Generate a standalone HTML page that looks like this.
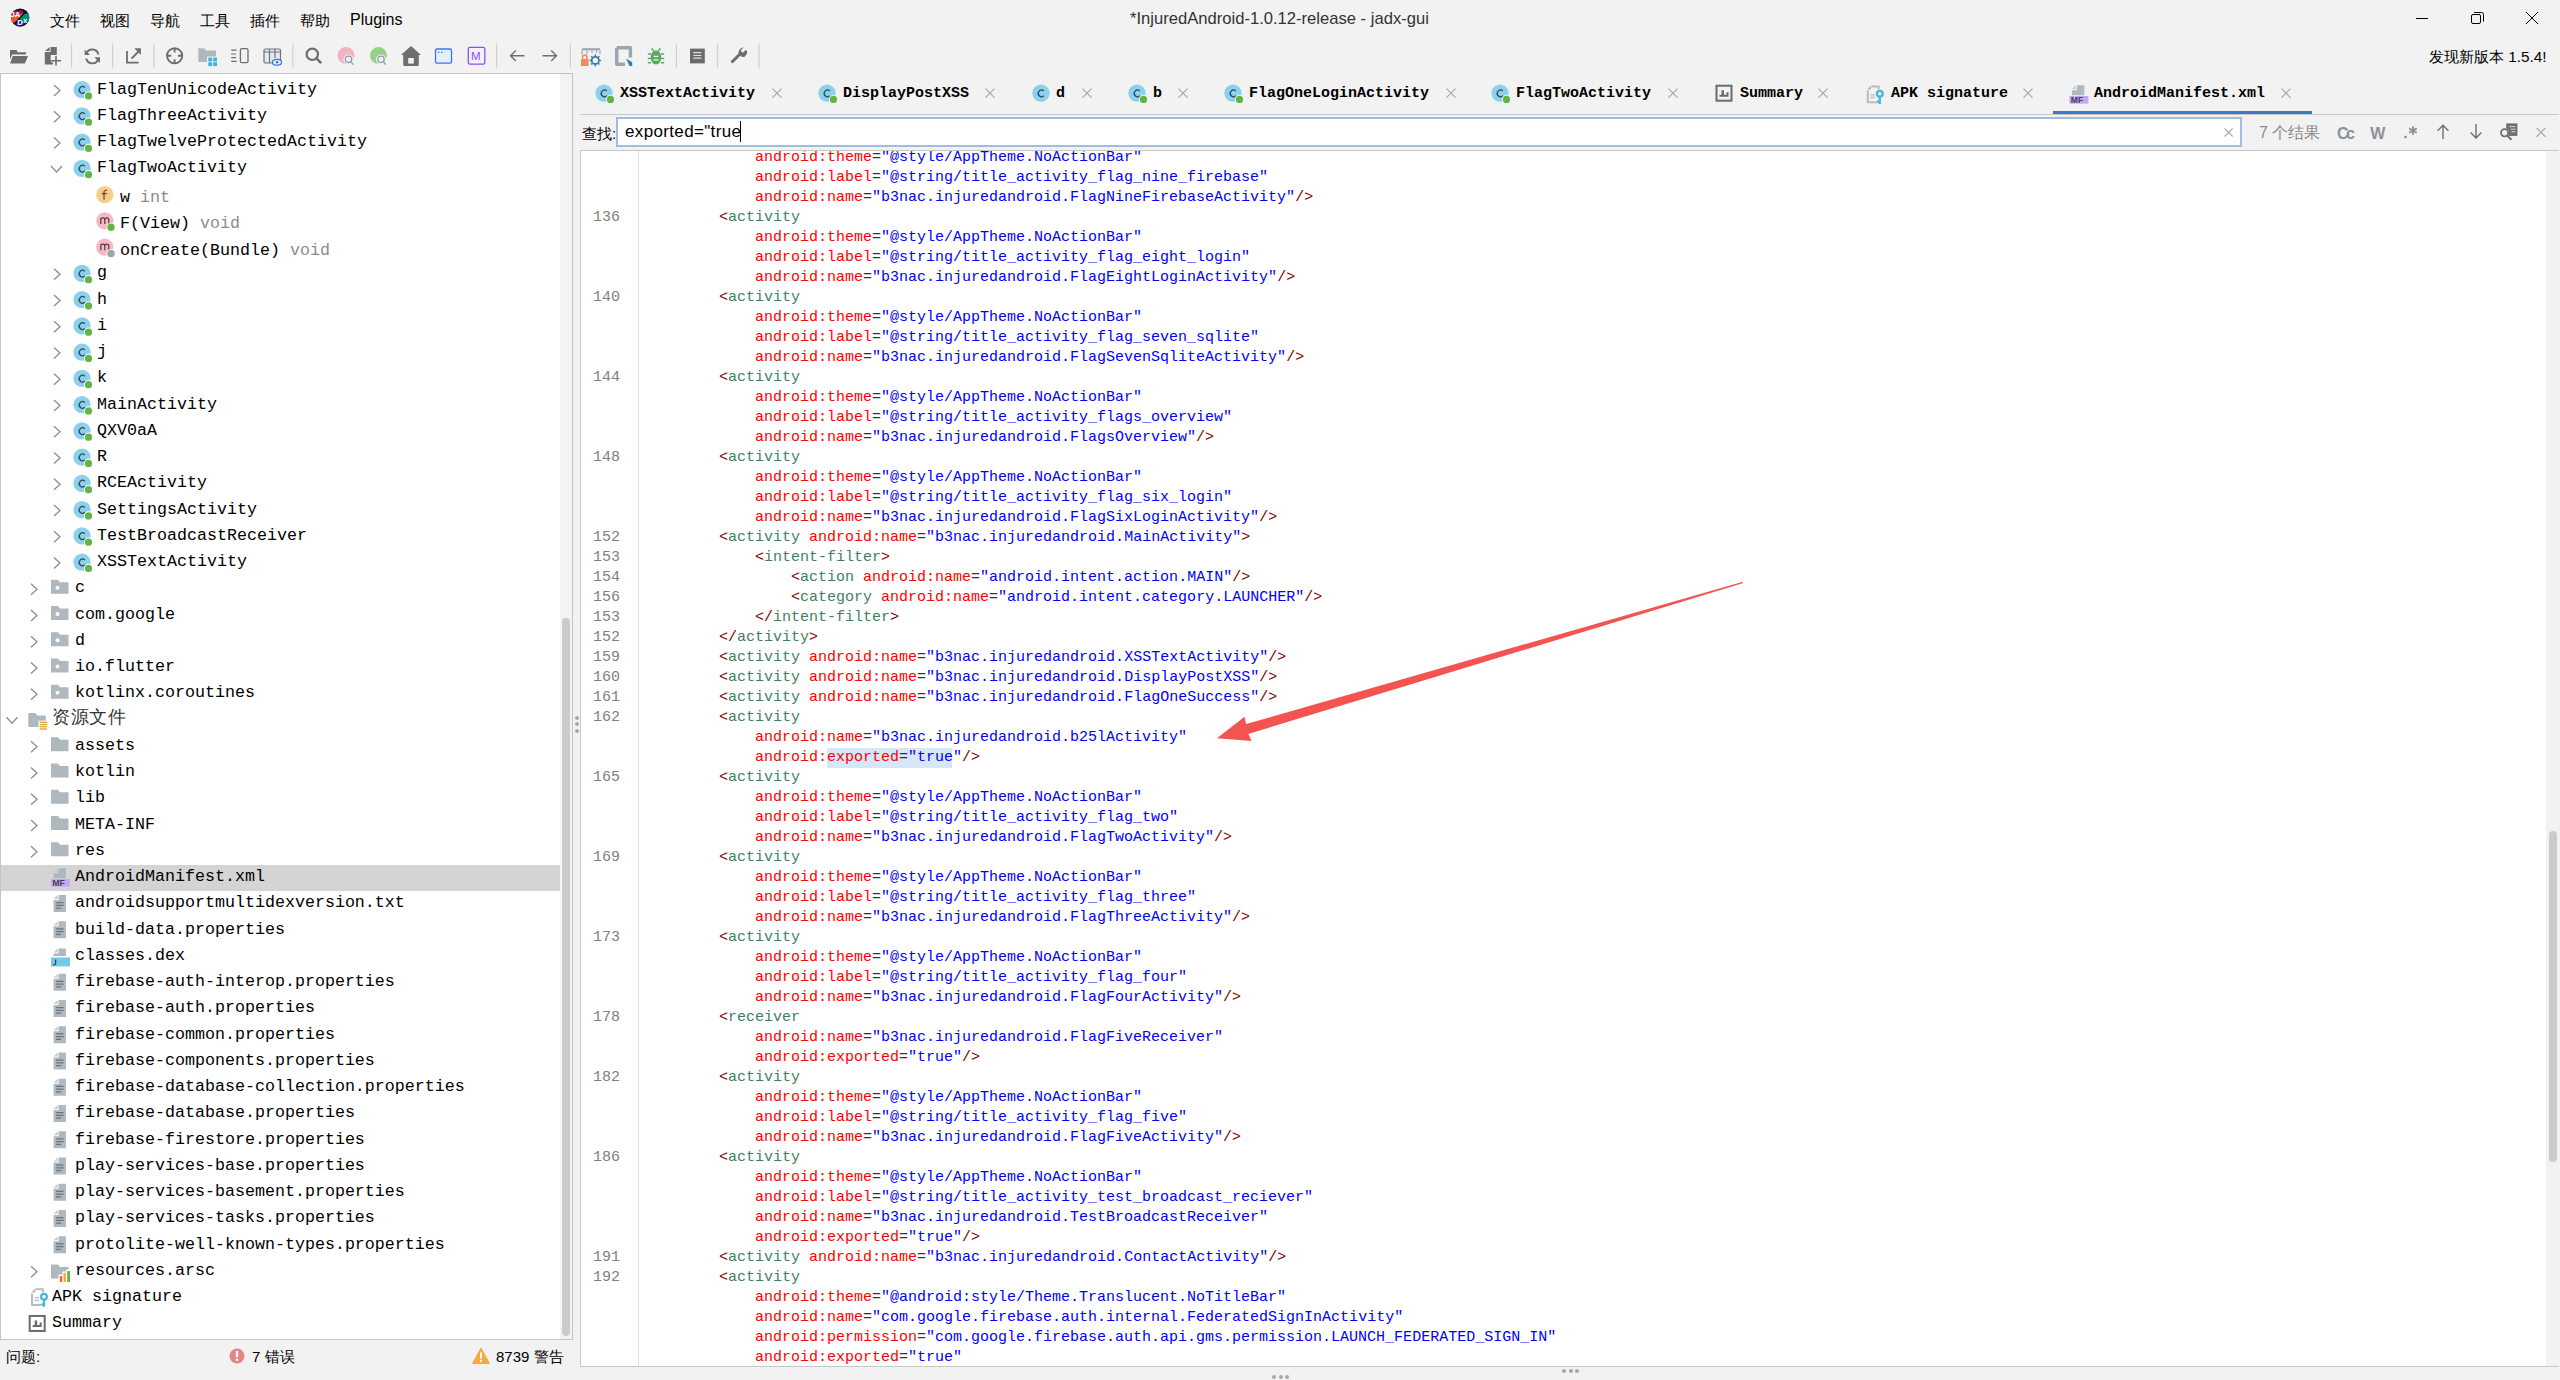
<!DOCTYPE html><html><head><meta charset="utf-8"><style>
*{margin:0;padding:0;box-sizing:border-box}
html,body{width:2560px;height:1380px;overflow:hidden}
body{background:#f2f2f2;position:relative;font-family:"Liberation Sans",sans-serif;color:#000}
.a{position:absolute;white-space:pre}
.ui{font-family:"Liberation Sans",sans-serif;font-size:16px;line-height:20px}
.mono{font-family:"Liberation Mono",monospace}
.code{font-family:"Liberation Mono",monospace;font-size:15px;line-height:20px;height:20px}
.tr{font-family:"Liberation Mono",monospace;font-size:16.67px;line-height:26px;height:26px}
.tab{font-family:"Liberation Mono",monospace;font-weight:bold;font-size:15px;line-height:20px}
.d{color:#800000}.t{color:#3f7f5f}.n{color:#ff0000}.q{color:#333}.v{color:#0000ff}
.ln{color:#808080;text-align:right;width:40px}
.gr{color:#8c8c8c}
svg{position:absolute;overflow:visible}
</style></head><body><div class="a ui" style="left:50px;top:11px;font-size:15px">文件</div>
<div class="a ui" style="left:100px;top:11px;font-size:15px">视图</div>
<div class="a ui" style="left:150px;top:11px;font-size:15px">导航</div>
<div class="a ui" style="left:200px;top:11px;font-size:15px">工具</div>
<div class="a ui" style="left:250px;top:11px;font-size:15px">插件</div>
<div class="a ui" style="left:300px;top:11px;font-size:15px">帮助</div>
<div class="a ui" style="left:350px;top:10px">Plugins</div>
<div class="a ui" style="left:1130px;top:9px;color:#333;font-size:16.6px">*InjuredAndroid-1.0.12-release - jadx-gui</div>
<div class="a ui" style="left:2429px;top:47.4px;font-size:15.3px">发现新版本 1.5.4!</div>
<div class="a" style="left:0;top:73px;width:573px;height:1267px;border:1px solid #c4c4c4;background:#fff"></div>
<div class="a" style="left:560px;top:74px;width:12px;height:1265px;background:#f3f3f3"></div>
<div class="a" style="left:562px;top:618px;width:8px;height:718px;border-radius:4px;background:#cbcbcb"></div>
<div class="a" style="left:1px;top:865px;width:559px;height:26px;background:#d4d4d4"></div>
<div class="a tr" style="left:97px;top:76.70px">FlagTenUnicodeActivity</div>
<div class="a tr" style="left:97px;top:102.95px">FlagThreeActivity</div>
<div class="a tr" style="left:97px;top:129.20px">FlagTwelveProtectedActivity</div>
<div class="a tr" style="left:97px;top:155.45px">FlagTwoActivity</div>
<div class="a tr" style="left:120px;top:185.20px">w <span class="gr">int</span></div>
<div class="a tr" style="left:120px;top:211.45px">F(View) <span class="gr">void</span></div>
<div class="a tr" style="left:120px;top:237.70px">onCreate(Bundle) <span class="gr">void</span></div>
<div class="a tr" style="left:97px;top:260.45px">g</div>
<div class="a tr" style="left:97px;top:286.70px">h</div>
<div class="a tr" style="left:97px;top:312.95px">i</div>
<div class="a tr" style="left:97px;top:339.20px">j</div>
<div class="a tr" style="left:97px;top:365.45px">k</div>
<div class="a tr" style="left:97px;top:391.70px">MainActivity</div>
<div class="a tr" style="left:97px;top:417.95px">QXV0aA</div>
<div class="a tr" style="left:97px;top:444.20px">R</div>
<div class="a tr" style="left:97px;top:470.45px">RCEActivity</div>
<div class="a tr" style="left:97px;top:496.70px">SettingsActivity</div>
<div class="a tr" style="left:97px;top:522.95px">TestBroadcastReceiver</div>
<div class="a tr" style="left:97px;top:549.20px">XSSTextActivity</div>
<div class="a tr" style="left:75px;top:575.45px">c</div>
<div class="a tr" style="left:75px;top:601.70px">com.google</div>
<div class="a tr" style="left:75px;top:627.95px">d</div>
<div class="a tr" style="left:75px;top:654.20px">io.flutter</div>
<div class="a tr" style="left:75px;top:680.45px">kotlinx.coroutines</div>
<div class="a tr" style="left:52px;top:706.70px;font-size:18px;color:#333;letter-spacing:0.6px;margin-top:-1.5px">资源文件</div>
<div class="a tr" style="left:75px;top:732.95px">assets</div>
<div class="a tr" style="left:75px;top:759.20px">kotlin</div>
<div class="a tr" style="left:75px;top:785.45px">lib</div>
<div class="a tr" style="left:75px;top:811.70px">META-INF</div>
<div class="a tr" style="left:75px;top:837.95px">res</div>
<div class="a tr" style="left:75px;top:864.20px">AndroidManifest.xml</div>
<div class="a tr" style="left:75px;top:890.45px">androidsupportmultidexversion.txt</div>
<div class="a tr" style="left:75px;top:916.70px">build-data.properties</div>
<div class="a tr" style="left:75px;top:942.95px">classes.dex</div>
<div class="a tr" style="left:75px;top:969.20px">firebase-auth-interop.properties</div>
<div class="a tr" style="left:75px;top:995.45px">firebase-auth.properties</div>
<div class="a tr" style="left:75px;top:1021.70px">firebase-common.properties</div>
<div class="a tr" style="left:75px;top:1047.95px">firebase-components.properties</div>
<div class="a tr" style="left:75px;top:1074.20px">firebase-database-collection.properties</div>
<div class="a tr" style="left:75px;top:1100.45px">firebase-database.properties</div>
<div class="a tr" style="left:75px;top:1126.70px">firebase-firestore.properties</div>
<div class="a tr" style="left:75px;top:1152.95px">play-services-base.properties</div>
<div class="a tr" style="left:75px;top:1179.20px">play-services-basement.properties</div>
<div class="a tr" style="left:75px;top:1205.45px">play-services-tasks.properties</div>
<div class="a tr" style="left:75px;top:1231.70px">protolite-well-known-types.properties</div>
<div class="a tr" style="left:75px;top:1257.95px">resources.arsc</div>
<div class="a tr" style="left:52px;top:1284.20px">APK signature</div>
<div class="a tr" style="left:52px;top:1310.45px">Summary</div>
<div class="a ui" style="left:6px;top:1347px;font-size:15px">问题:</div>
<div class="a ui" style="left:252px;top:1347px;font-size:15px">7 错误</div>
<div class="a ui" style="left:496px;top:1347px;font-size:15px">8739 警告</div>
<div class="a" style="left:580px;top:114px;width:1979px;height:1px;background:#c8c8c8"></div>
<div class="a" style="left:2053px;top:111px;width:259px;height:3px;background:#3a7bc8"></div>
<div class="a tab" style="left:620px;top:84px">XSSTextActivity</div>
<div class="a tab" style="left:843px;top:84px">DisplayPostXSS</div>
<div class="a tab" style="left:1056px;top:84px">d</div>
<div class="a tab" style="left:1153px;top:84px">b</div>
<div class="a tab" style="left:1249px;top:84px">FlagOneLoginActivity</div>
<div class="a tab" style="left:1516px;top:84px">FlagTwoActivity</div>
<div class="a tab" style="left:1740px;top:84px">Summary</div>
<div class="a tab" style="left:1891px;top:84px">APK signature</div>
<div class="a tab" style="left:2094px;top:84px">AndroidManifest.xml</div>
<div class="a ui" style="left:582px;top:124px;font-size:15px">查找:</div>
<div class="a" style="left:616px;top:117px;width:1626px;height:30px;border:2px solid #9dbde4;background:#fff"></div>
<div class="a ui" style="left:625px;top:122px;font-size:17px;letter-spacing:0.35px">exported="true</div>
<div class="a" style="left:740px;top:121px;width:1.3px;height:21px;background:#000"></div>
<div class="a ui" style="left:2259px;top:123px;color:#8a8a8a">7 个结果</div>
<div class="a" style="left:580px;top:150px;width:1979px;height:1217px;border:1px solid #c8c8c8;border-right:none;background:#fff;overflow:hidden" id="ed"></div>
<div class="a" style="left:638px;top:151px;width:1px;height:1215px;background:#e0e0e0"></div>
<div class="a" style="left:2546px;top:151px;width:13px;height:1215px;background:#f2f2f2"></div>
<div class="a" style="left:2549px;top:831px;width:8px;height:331px;border-radius:4px;background:#cbcbcb"></div>
<div class="a" style="left:581px;top:151px;width:1965px;height:1215px;overflow:hidden">
<div class="a" style="left:-581px;top:-151px;width:2560px;height:1380px">
<div class="a" style="left:827px;top:748px;width:125px;height:20px;background:#d7e7f9"></div>
<div class="a code" style="left:755px;top:148px"><span class="n">android:theme</span><span class="q">=</span><span class="v">"@style/AppTheme.NoActionBar"</span></div>
<div class="a code" style="left:755px;top:168px"><span class="n">android:label</span><span class="q">=</span><span class="v">"@string/title_activity_flag_nine_firebase"</span></div>
<div class="a code" style="left:755px;top:188px"><span class="n">android:name</span><span class="q">=</span><span class="v">"b3nac.injuredandroid.FlagNineFirebaseActivity"</span><span class="d">/&gt;</span></div>
<div class="a code ln" style="left:580px;top:208px">136</div>
<div class="a code" style="left:719px;top:208px"><span class="d">&lt;</span><span class="t">activity</span></div>
<div class="a code" style="left:755px;top:228px"><span class="n">android:theme</span><span class="q">=</span><span class="v">"@style/AppTheme.NoActionBar"</span></div>
<div class="a code" style="left:755px;top:248px"><span class="n">android:label</span><span class="q">=</span><span class="v">"@string/title_activity_flag_eight_login"</span></div>
<div class="a code" style="left:755px;top:268px"><span class="n">android:name</span><span class="q">=</span><span class="v">"b3nac.injuredandroid.FlagEightLoginActivity"</span><span class="d">/&gt;</span></div>
<div class="a code ln" style="left:580px;top:288px">140</div>
<div class="a code" style="left:719px;top:288px"><span class="d">&lt;</span><span class="t">activity</span></div>
<div class="a code" style="left:755px;top:308px"><span class="n">android:theme</span><span class="q">=</span><span class="v">"@style/AppTheme.NoActionBar"</span></div>
<div class="a code" style="left:755px;top:328px"><span class="n">android:label</span><span class="q">=</span><span class="v">"@string/title_activity_flag_seven_sqlite"</span></div>
<div class="a code" style="left:755px;top:348px"><span class="n">android:name</span><span class="q">=</span><span class="v">"b3nac.injuredandroid.FlagSevenSqliteActivity"</span><span class="d">/&gt;</span></div>
<div class="a code ln" style="left:580px;top:368px">144</div>
<div class="a code" style="left:719px;top:368px"><span class="d">&lt;</span><span class="t">activity</span></div>
<div class="a code" style="left:755px;top:388px"><span class="n">android:theme</span><span class="q">=</span><span class="v">"@style/AppTheme.NoActionBar"</span></div>
<div class="a code" style="left:755px;top:408px"><span class="n">android:label</span><span class="q">=</span><span class="v">"@string/title_activity_flags_overview"</span></div>
<div class="a code" style="left:755px;top:428px"><span class="n">android:name</span><span class="q">=</span><span class="v">"b3nac.injuredandroid.FlagsOverview"</span><span class="d">/&gt;</span></div>
<div class="a code ln" style="left:580px;top:448px">148</div>
<div class="a code" style="left:719px;top:448px"><span class="d">&lt;</span><span class="t">activity</span></div>
<div class="a code" style="left:755px;top:468px"><span class="n">android:theme</span><span class="q">=</span><span class="v">"@style/AppTheme.NoActionBar"</span></div>
<div class="a code" style="left:755px;top:488px"><span class="n">android:label</span><span class="q">=</span><span class="v">"@string/title_activity_flag_six_login"</span></div>
<div class="a code" style="left:755px;top:508px"><span class="n">android:name</span><span class="q">=</span><span class="v">"b3nac.injuredandroid.FlagSixLoginActivity"</span><span class="d">/&gt;</span></div>
<div class="a code ln" style="left:580px;top:528px">152</div>
<div class="a code" style="left:719px;top:528px"><span class="d">&lt;</span><span class="t">activity</span> <span class="n">android:name</span><span class="q">=</span><span class="v">"b3nac.injuredandroid.MainActivity"</span><span class="d">&gt;</span></div>
<div class="a code ln" style="left:580px;top:548px">153</div>
<div class="a code" style="left:755px;top:548px"><span class="d">&lt;</span><span class="t">intent-filter</span><span class="d">&gt;</span></div>
<div class="a code ln" style="left:580px;top:568px">154</div>
<div class="a code" style="left:791px;top:568px"><span class="d">&lt;</span><span class="t">action</span> <span class="n">android:name</span><span class="q">=</span><span class="v">"android.intent.action.MAIN"</span><span class="d">/&gt;</span></div>
<div class="a code ln" style="left:580px;top:588px">156</div>
<div class="a code" style="left:791px;top:588px"><span class="d">&lt;</span><span class="t">category</span> <span class="n">android:name</span><span class="q">=</span><span class="v">"android.intent.category.LAUNCHER"</span><span class="d">/&gt;</span></div>
<div class="a code ln" style="left:580px;top:608px">153</div>
<div class="a code" style="left:755px;top:608px"><span class="d">&lt;/</span><span class="t">intent-filter</span><span class="d">&gt;</span></div>
<div class="a code ln" style="left:580px;top:628px">152</div>
<div class="a code" style="left:719px;top:628px"><span class="d">&lt;/</span><span class="t">activity</span><span class="d">&gt;</span></div>
<div class="a code ln" style="left:580px;top:648px">159</div>
<div class="a code" style="left:719px;top:648px"><span class="d">&lt;</span><span class="t">activity</span> <span class="n">android:name</span><span class="q">=</span><span class="v">"b3nac.injuredandroid.XSSTextActivity"</span><span class="d">/&gt;</span></div>
<div class="a code ln" style="left:580px;top:668px">160</div>
<div class="a code" style="left:719px;top:668px"><span class="d">&lt;</span><span class="t">activity</span> <span class="n">android:name</span><span class="q">=</span><span class="v">"b3nac.injuredandroid.DisplayPostXSS"</span><span class="d">/&gt;</span></div>
<div class="a code ln" style="left:580px;top:688px">161</div>
<div class="a code" style="left:719px;top:688px"><span class="d">&lt;</span><span class="t">activity</span> <span class="n">android:name</span><span class="q">=</span><span class="v">"b3nac.injuredandroid.FlagOneSuccess"</span><span class="d">/&gt;</span></div>
<div class="a code ln" style="left:580px;top:708px">162</div>
<div class="a code" style="left:719px;top:708px"><span class="d">&lt;</span><span class="t">activity</span></div>
<div class="a code" style="left:755px;top:728px"><span class="n">android:name</span><span class="q">=</span><span class="v">"b3nac.injuredandroid.b25lActivity"</span></div>
<div class="a code" style="left:755px;top:748px"><span class="n">android:</span><span class="n">exported</span><span class="q">=</span><span class="v">"true"</span><span class="d">/&gt;</span></div>
<div class="a code ln" style="left:580px;top:768px">165</div>
<div class="a code" style="left:719px;top:768px"><span class="d">&lt;</span><span class="t">activity</span></div>
<div class="a code" style="left:755px;top:788px"><span class="n">android:theme</span><span class="q">=</span><span class="v">"@style/AppTheme.NoActionBar"</span></div>
<div class="a code" style="left:755px;top:808px"><span class="n">android:label</span><span class="q">=</span><span class="v">"@string/title_activity_flag_two"</span></div>
<div class="a code" style="left:755px;top:828px"><span class="n">android:name</span><span class="q">=</span><span class="v">"b3nac.injuredandroid.FlagTwoActivity"</span><span class="d">/&gt;</span></div>
<div class="a code ln" style="left:580px;top:848px">169</div>
<div class="a code" style="left:719px;top:848px"><span class="d">&lt;</span><span class="t">activity</span></div>
<div class="a code" style="left:755px;top:868px"><span class="n">android:theme</span><span class="q">=</span><span class="v">"@style/AppTheme.NoActionBar"</span></div>
<div class="a code" style="left:755px;top:888px"><span class="n">android:label</span><span class="q">=</span><span class="v">"@string/title_activity_flag_three"</span></div>
<div class="a code" style="left:755px;top:908px"><span class="n">android:name</span><span class="q">=</span><span class="v">"b3nac.injuredandroid.FlagThreeActivity"</span><span class="d">/&gt;</span></div>
<div class="a code ln" style="left:580px;top:928px">173</div>
<div class="a code" style="left:719px;top:928px"><span class="d">&lt;</span><span class="t">activity</span></div>
<div class="a code" style="left:755px;top:948px"><span class="n">android:theme</span><span class="q">=</span><span class="v">"@style/AppTheme.NoActionBar"</span></div>
<div class="a code" style="left:755px;top:968px"><span class="n">android:label</span><span class="q">=</span><span class="v">"@string/title_activity_flag_four"</span></div>
<div class="a code" style="left:755px;top:988px"><span class="n">android:name</span><span class="q">=</span><span class="v">"b3nac.injuredandroid.FlagFourActivity"</span><span class="d">/&gt;</span></div>
<div class="a code ln" style="left:580px;top:1008px">178</div>
<div class="a code" style="left:719px;top:1008px"><span class="d">&lt;</span><span class="t">receiver</span></div>
<div class="a code" style="left:755px;top:1028px"><span class="n">android:name</span><span class="q">=</span><span class="v">"b3nac.injuredandroid.FlagFiveReceiver"</span></div>
<div class="a code" style="left:755px;top:1048px"><span class="n">android:exported</span><span class="q">=</span><span class="v">"true"</span><span class="d">/&gt;</span></div>
<div class="a code ln" style="left:580px;top:1068px">182</div>
<div class="a code" style="left:719px;top:1068px"><span class="d">&lt;</span><span class="t">activity</span></div>
<div class="a code" style="left:755px;top:1088px"><span class="n">android:theme</span><span class="q">=</span><span class="v">"@style/AppTheme.NoActionBar"</span></div>
<div class="a code" style="left:755px;top:1108px"><span class="n">android:label</span><span class="q">=</span><span class="v">"@string/title_activity_flag_five"</span></div>
<div class="a code" style="left:755px;top:1128px"><span class="n">android:name</span><span class="q">=</span><span class="v">"b3nac.injuredandroid.FlagFiveActivity"</span><span class="d">/&gt;</span></div>
<div class="a code ln" style="left:580px;top:1148px">186</div>
<div class="a code" style="left:719px;top:1148px"><span class="d">&lt;</span><span class="t">activity</span></div>
<div class="a code" style="left:755px;top:1168px"><span class="n">android:theme</span><span class="q">=</span><span class="v">"@style/AppTheme.NoActionBar"</span></div>
<div class="a code" style="left:755px;top:1188px"><span class="n">android:label</span><span class="q">=</span><span class="v">"@string/title_activity_test_broadcast_reciever"</span></div>
<div class="a code" style="left:755px;top:1208px"><span class="n">android:name</span><span class="q">=</span><span class="v">"b3nac.injuredandroid.TestBroadcastReceiver"</span></div>
<div class="a code" style="left:755px;top:1228px"><span class="n">android:exported</span><span class="q">=</span><span class="v">"true"</span><span class="d">/&gt;</span></div>
<div class="a code ln" style="left:580px;top:1248px">191</div>
<div class="a code" style="left:719px;top:1248px"><span class="d">&lt;</span><span class="t">activity</span> <span class="n">android:name</span><span class="q">=</span><span class="v">"b3nac.injuredandroid.ContactActivity"</span><span class="d">/&gt;</span></div>
<div class="a code ln" style="left:580px;top:1268px">192</div>
<div class="a code" style="left:719px;top:1268px"><span class="d">&lt;</span><span class="t">activity</span></div>
<div class="a code" style="left:755px;top:1288px"><span class="n">android:theme</span><span class="q">=</span><span class="v">"@android:style/Theme.Translucent.NoTitleBar"</span></div>
<div class="a code" style="left:755px;top:1308px"><span class="n">android:name</span><span class="q">=</span><span class="v">"com.google.firebase.auth.internal.FederatedSignInActivity"</span></div>
<div class="a code" style="left:755px;top:1328px"><span class="n">android:permission</span><span class="q">=</span><span class="v">"com.google.firebase.auth.api.gms.permission.LAUNCH_FEDERATED_SIGN_IN"</span></div>
<div class="a code" style="left:755px;top:1348px"><span class="n">android:exported</span><span class="q">=</span><span class="v">"true"</span></div>
</div></div>
<div class="a" style="left:1272.0px;top:1374.5px;width:4px;height:4px;border-radius:2px;background:#a8a8a8"></div>
<div class="a" style="left:1278.5px;top:1374.5px;width:4px;height:4px;border-radius:2px;background:#a8a8a8"></div>
<div class="a" style="left:1284.5px;top:1374.5px;width:4px;height:4px;border-radius:2px;background:#a8a8a8"></div>
<div class="a" style="left:1562.0px;top:1368.5px;width:4px;height:4px;border-radius:2px;background:#a8a8a8"></div>
<div class="a" style="left:1568.5px;top:1368.5px;width:4px;height:4px;border-radius:2px;background:#a8a8a8"></div>
<div class="a" style="left:1574.5px;top:1368.5px;width:4px;height:4px;border-radius:2px;background:#a8a8a8"></div>
<div class="a" style="left:574.5px;top:715.5px;width:4px;height:4px;border-radius:2px;background:#a8a8a8"></div>
<div class="a" style="left:574.5px;top:722.0px;width:4px;height:4px;border-radius:2px;background:#a8a8a8"></div>
<div class="a" style="left:574.5px;top:728.5px;width:4px;height:4px;border-radius:2px;background:#a8a8a8"></div>
<svg class="a" style="left:0;top:0" width="2560" height="1380" viewBox="0 0 2560 1380"><path d="M54,85.0 L60,90.5 L54,96.0" fill="none" stroke="#8c8c8c" stroke-width="1.3"/><circle cx="82" cy="89.7" r="8.6" fill="#89d1ec"/><path d="M84.8,87.5 A3.3,3.3 0 1 0 84.8,92.3" fill="none" stroke="#37474f" stroke-width="1.3"/><circle cx="88.5" cy="95.9" r="4.6" fill="#fff"/><circle cx="88.5" cy="95.9" r="3.6" fill="#62b543"/><path d="M54,111.25 L60,116.75 L54,122.25" fill="none" stroke="#8c8c8c" stroke-width="1.3"/><circle cx="82" cy="115.95" r="8.6" fill="#89d1ec"/><path d="M84.8,113.75 A3.3,3.3 0 1 0 84.8,118.55" fill="none" stroke="#37474f" stroke-width="1.3"/><circle cx="88.5" cy="122.15" r="4.6" fill="#fff"/><circle cx="88.5" cy="122.15" r="3.6" fill="#62b543"/><path d="M54,137.5 L60,143.0 L54,148.5" fill="none" stroke="#8c8c8c" stroke-width="1.3"/><circle cx="82" cy="142.2" r="8.6" fill="#89d1ec"/><path d="M84.8,140.0 A3.3,3.3 0 1 0 84.8,144.79999999999998" fill="none" stroke="#37474f" stroke-width="1.3"/><circle cx="88.5" cy="148.39999999999998" r="4.6" fill="#fff"/><circle cx="88.5" cy="148.39999999999998" r="3.6" fill="#62b543"/><path d="M51.0,166.04999999999998 L56.5,172.04999999999998 L62.0,166.04999999999998" fill="none" stroke="#8c8c8c" stroke-width="1.3"/><circle cx="82" cy="168.45" r="8.6" fill="#89d1ec"/><path d="M84.8,166.25 A3.3,3.3 0 1 0 84.8,171.04999999999998" fill="none" stroke="#37474f" stroke-width="1.3"/><circle cx="88.5" cy="174.64999999999998" r="4.6" fill="#fff"/><circle cx="88.5" cy="174.64999999999998" r="3.6" fill="#62b543"/><circle cx="104.8" cy="194.7" r="8.6" fill="#f8cd8b"/><path d="M107.0,190.39999999999998 Q103.8,189.7 104.0,192.7 V199.7 M101.8,193.7 H106.8" fill="none" stroke="#5c4a32" stroke-width="1.2"/><circle cx="104.8" cy="220.95" r="8.6" fill="#f7b8c6"/><path d="M100.8,223.95 V217.95 M100.8,219.95 Q100.8,217.95 102.8,217.95 Q104.8,217.95 104.8,219.95 V223.95 M104.8,219.95 Q104.8,217.95 106.8,217.95 Q108.8,217.95 108.8,219.95 V223.95" fill="none" stroke="#4a3b3f" stroke-width="1.2"/><circle cx="111.0" cy="227.25" r="4.6" fill="#fff"/><circle cx="111.0" cy="227.25" r="3.7" fill="#62b543"/><circle cx="104.8" cy="247.2" r="8.6" fill="#f7b8c6"/><path d="M100.8,250.2 V244.2 M100.8,246.2 Q100.8,244.2 102.8,244.2 Q104.8,244.2 104.8,246.2 V250.2 M104.8,246.2 Q104.8,244.2 106.8,244.2 Q108.8,244.2 108.8,246.2 V250.2" fill="none" stroke="#4a3b3f" stroke-width="1.2"/><circle cx="111.0" cy="253.5" r="4.6" fill="#fff"/><circle cx="111.0" cy="253.5" r="3.7" fill="#9aa7b0"/><path d="M54,268.75 L60,274.25 L54,279.75" fill="none" stroke="#8c8c8c" stroke-width="1.3"/><circle cx="82" cy="273.45" r="8.6" fill="#89d1ec"/><path d="M84.8,271.25 A3.3,3.3 0 1 0 84.8,276.05" fill="none" stroke="#37474f" stroke-width="1.3"/><circle cx="88.5" cy="279.65" r="4.6" fill="#fff"/><circle cx="88.5" cy="279.65" r="3.6" fill="#62b543"/><path d="M54,295.0 L60,300.5 L54,306.0" fill="none" stroke="#8c8c8c" stroke-width="1.3"/><circle cx="82" cy="299.7" r="8.6" fill="#89d1ec"/><path d="M84.8,297.5 A3.3,3.3 0 1 0 84.8,302.3" fill="none" stroke="#37474f" stroke-width="1.3"/><circle cx="88.5" cy="305.9" r="4.6" fill="#fff"/><circle cx="88.5" cy="305.9" r="3.6" fill="#62b543"/><path d="M54,321.25 L60,326.75 L54,332.25" fill="none" stroke="#8c8c8c" stroke-width="1.3"/><circle cx="82" cy="325.95" r="8.6" fill="#89d1ec"/><path d="M84.8,323.75 A3.3,3.3 0 1 0 84.8,328.55" fill="none" stroke="#37474f" stroke-width="1.3"/><circle cx="88.5" cy="332.15" r="4.6" fill="#fff"/><circle cx="88.5" cy="332.15" r="3.6" fill="#62b543"/><path d="M54,347.5 L60,353.0 L54,358.5" fill="none" stroke="#8c8c8c" stroke-width="1.3"/><circle cx="82" cy="352.2" r="8.6" fill="#89d1ec"/><path d="M84.8,350.0 A3.3,3.3 0 1 0 84.8,354.8" fill="none" stroke="#37474f" stroke-width="1.3"/><circle cx="88.5" cy="358.4" r="4.6" fill="#fff"/><circle cx="88.5" cy="358.4" r="3.6" fill="#62b543"/><path d="M54,373.75 L60,379.25 L54,384.75" fill="none" stroke="#8c8c8c" stroke-width="1.3"/><circle cx="82" cy="378.45" r="8.6" fill="#89d1ec"/><path d="M84.8,376.25 A3.3,3.3 0 1 0 84.8,381.05" fill="none" stroke="#37474f" stroke-width="1.3"/><circle cx="88.5" cy="384.65" r="4.6" fill="#fff"/><circle cx="88.5" cy="384.65" r="3.6" fill="#62b543"/><path d="M54,400.0 L60,405.5 L54,411.0" fill="none" stroke="#8c8c8c" stroke-width="1.3"/><circle cx="82" cy="404.7" r="8.6" fill="#89d1ec"/><path d="M84.8,402.5 A3.3,3.3 0 1 0 84.8,407.3" fill="none" stroke="#37474f" stroke-width="1.3"/><circle cx="88.5" cy="410.9" r="4.6" fill="#fff"/><circle cx="88.5" cy="410.9" r="3.6" fill="#62b543"/><path d="M54,426.25 L60,431.75 L54,437.25" fill="none" stroke="#8c8c8c" stroke-width="1.3"/><circle cx="82" cy="430.95" r="8.6" fill="#89d1ec"/><path d="M84.8,428.75 A3.3,3.3 0 1 0 84.8,433.55" fill="none" stroke="#37474f" stroke-width="1.3"/><circle cx="88.5" cy="437.15" r="4.6" fill="#fff"/><circle cx="88.5" cy="437.15" r="3.6" fill="#62b543"/><path d="M54,452.5 L60,458.0 L54,463.5" fill="none" stroke="#8c8c8c" stroke-width="1.3"/><circle cx="82" cy="457.2" r="8.6" fill="#89d1ec"/><path d="M84.8,455.0 A3.3,3.3 0 1 0 84.8,459.8" fill="none" stroke="#37474f" stroke-width="1.3"/><circle cx="88.5" cy="463.4" r="4.6" fill="#fff"/><circle cx="88.5" cy="463.4" r="3.6" fill="#62b543"/><path d="M54,478.75 L60,484.25 L54,489.75" fill="none" stroke="#8c8c8c" stroke-width="1.3"/><circle cx="82" cy="483.45" r="8.6" fill="#89d1ec"/><path d="M84.8,481.25 A3.3,3.3 0 1 0 84.8,486.05" fill="none" stroke="#37474f" stroke-width="1.3"/><circle cx="88.5" cy="489.65" r="4.6" fill="#fff"/><circle cx="88.5" cy="489.65" r="3.6" fill="#62b543"/><path d="M54,505.0 L60,510.5 L54,516.0" fill="none" stroke="#8c8c8c" stroke-width="1.3"/><circle cx="82" cy="509.7" r="8.6" fill="#89d1ec"/><path d="M84.8,507.5 A3.3,3.3 0 1 0 84.8,512.3" fill="none" stroke="#37474f" stroke-width="1.3"/><circle cx="88.5" cy="515.9" r="4.6" fill="#fff"/><circle cx="88.5" cy="515.9" r="3.6" fill="#62b543"/><path d="M54,531.25 L60,536.75 L54,542.25" fill="none" stroke="#8c8c8c" stroke-width="1.3"/><circle cx="82" cy="535.95" r="8.6" fill="#89d1ec"/><path d="M84.8,533.75 A3.3,3.3 0 1 0 84.8,538.5500000000001" fill="none" stroke="#37474f" stroke-width="1.3"/><circle cx="88.5" cy="542.1500000000001" r="4.6" fill="#fff"/><circle cx="88.5" cy="542.1500000000001" r="3.6" fill="#62b543"/><path d="M54,557.5 L60,563.0 L54,568.5" fill="none" stroke="#8c8c8c" stroke-width="1.3"/><circle cx="82" cy="562.2" r="8.6" fill="#89d1ec"/><path d="M84.8,560.0 A3.3,3.3 0 1 0 84.8,564.8000000000001" fill="none" stroke="#37474f" stroke-width="1.3"/><circle cx="88.5" cy="568.4000000000001" r="4.6" fill="#fff"/><circle cx="88.5" cy="568.4000000000001" r="3.6" fill="#62b543"/><path d="M31,583.75 L37,589.25 L31,594.75" fill="none" stroke="#8c8c8c" stroke-width="1.3"/><path d="M51,579.75 H58 L60,582.25 H68.5 V593.75 H51 Z" fill="#afb8bf"/><circle cx="57.5" cy="587.75" r="2" fill="#fff"/><path d="M31,610.0 L37,615.5 L31,621.0" fill="none" stroke="#8c8c8c" stroke-width="1.3"/><path d="M51,606.0 H58 L60,608.5 H68.5 V620.0 H51 Z" fill="#afb8bf"/><circle cx="57.5" cy="614.0" r="2" fill="#fff"/><path d="M31,636.25 L37,641.75 L31,647.25" fill="none" stroke="#8c8c8c" stroke-width="1.3"/><path d="M51,632.25 H58 L60,634.75 H68.5 V646.25 H51 Z" fill="#afb8bf"/><circle cx="57.5" cy="640.25" r="2" fill="#fff"/><path d="M31,662.5 L37,668.0 L31,673.5" fill="none" stroke="#8c8c8c" stroke-width="1.3"/><path d="M51,658.5 H58 L60,661.0 H68.5 V672.5 H51 Z" fill="#afb8bf"/><circle cx="57.5" cy="666.5" r="2" fill="#fff"/><path d="M31,688.75 L37,694.25 L31,699.75" fill="none" stroke="#8c8c8c" stroke-width="1.3"/><path d="M51,684.75 H58 L60,687.25 H68.5 V698.75 H51 Z" fill="#afb8bf"/><circle cx="57.5" cy="692.75" r="2" fill="#fff"/><path d="M6.5,717.3000000000001 L12,723.3000000000001 L17.5,717.3000000000001" fill="none" stroke="#8c8c8c" stroke-width="1.3"/><path d="M28.3,713.0 H35.3 L37.3,715.5 H45.8 V727.0 H28.3 Z" fill="#afb8bf"/><rect x="38.5" y="720.7" width="9.5" height="10" fill="#fff"/><rect x="39.6" y="721.7" width="7.4" height="1.3" fill="#e0a030"/><rect x="39.6" y="723.9" width="7.4" height="1.3" fill="#e0a030"/><rect x="39.6" y="726.1" width="7.4" height="1.3" fill="#e0a030"/><rect x="39.6" y="728.3" width="7.4" height="1.3" fill="#e0a030"/><path d="M31,741.25 L37,746.75 L31,752.25" fill="none" stroke="#8c8c8c" stroke-width="1.3"/><path d="M51,737.25 H58 L60,739.75 H68.5 V751.25 H51 Z" fill="#afb8bf"/><path d="M31,767.5 L37,773.0 L31,778.5" fill="none" stroke="#8c8c8c" stroke-width="1.3"/><path d="M51,763.5 H58 L60,766.0 H68.5 V777.5 H51 Z" fill="#afb8bf"/><path d="M31,793.75 L37,799.25 L31,804.75" fill="none" stroke="#8c8c8c" stroke-width="1.3"/><path d="M51,789.75 H58 L60,792.25 H68.5 V803.75 H51 Z" fill="#afb8bf"/><path d="M31,820.0 L37,825.5 L31,831.0" fill="none" stroke="#8c8c8c" stroke-width="1.3"/><path d="M51,816.0 H58 L60,818.5 H68.5 V830.0 H51 Z" fill="#afb8bf"/><path d="M31,846.25 L37,851.75 L31,857.25" fill="none" stroke="#8c8c8c" stroke-width="1.3"/><path d="M51,842.25 H58 L60,844.75 H68.5 V856.25 H51 Z" fill="#afb8bf"/><path d="M58.6,868.2 H65.9 V878.2 H53.6 V873.2 H58.6 Z" fill="#afb8bf"/><path d="M53.6,872.2 L57.6,868.2 V872.2 Z" fill="#c3cacf"/><rect x="51.0" y="879.0" width="19" height="7.6" fill="#c5a8f0"/><text x="52.4" y="885.8000000000001" font-family="Liberation Sans" font-weight="bold" font-size="8.5" fill="#4b3d5c">MF</text><path d="M58.6,895.0500000000001 H65.9 V912.0500000000001 H53.6 V900.0500000000001 H58.6 Z" fill="#afb8bf"/><path d="M53.6,899.0500000000001 L57.6,895.0500000000001 V899.0500000000001 Z" fill="#c3cacf"/><path d="M56.1,902.5500000000001 H63.6 M56.1,905.45 H63.6 M56.1,908.0500000000001 H61.1" stroke="#6b7378" stroke-width="1.3"/><path d="M58.6,921.3000000000001 H65.9 V938.3000000000001 H53.6 V926.3000000000001 H58.6 Z" fill="#afb8bf"/><path d="M53.6,925.3000000000001 L57.6,921.3000000000001 V925.3000000000001 Z" fill="#c3cacf"/><path d="M56.1,928.8000000000001 H63.6 M56.1,931.7 H63.6 M56.1,934.3000000000001 H61.1" stroke="#6b7378" stroke-width="1.3"/><path d="M58.6,948.45 H65.9 V955.95 H53.6 V953.45 H58.6 Z" fill="#afb8bf"/><path d="M53.6,952.45 L57.6,948.45 V952.45 Z" fill="#c3cacf"/><rect x="51.0" y="957.45" width="19" height="9" fill="#76c9e6"/><path d="M55.6,959.45 V963.45 Q55.6,964.95 54.1,964.95 H53.1" fill="none" stroke="#37474f" stroke-width="1.3"/><path d="M58.6,973.8000000000001 H65.9 V990.8000000000001 H53.6 V978.8000000000001 H58.6 Z" fill="#afb8bf"/><path d="M53.6,977.8000000000001 L57.6,973.8000000000001 V977.8000000000001 Z" fill="#c3cacf"/><path d="M56.1,981.3000000000001 H63.6 M56.1,984.2 H63.6 M56.1,986.8000000000001 H61.1" stroke="#6b7378" stroke-width="1.3"/><path d="M58.6,1000.0500000000001 H65.9 V1017.0500000000001 H53.6 V1005.0500000000001 H58.6 Z" fill="#afb8bf"/><path d="M53.6,1004.0500000000001 L57.6,1000.0500000000001 V1004.0500000000001 Z" fill="#c3cacf"/><path d="M56.1,1007.5500000000001 H63.6 M56.1,1010.45 H63.6 M56.1,1013.0500000000001 H61.1" stroke="#6b7378" stroke-width="1.3"/><path d="M58.6,1026.3 H65.9 V1043.3 H53.6 V1031.3 H58.6 Z" fill="#afb8bf"/><path d="M53.6,1030.3 L57.6,1026.3 V1030.3 Z" fill="#c3cacf"/><path d="M56.1,1033.8 H63.6 M56.1,1036.7 H63.6 M56.1,1039.3 H61.1" stroke="#6b7378" stroke-width="1.3"/><path d="M58.6,1052.55 H65.9 V1069.55 H53.6 V1057.55 H58.6 Z" fill="#afb8bf"/><path d="M53.6,1056.55 L57.6,1052.55 V1056.55 Z" fill="#c3cacf"/><path d="M56.1,1060.05 H63.6 M56.1,1062.95 H63.6 M56.1,1065.55 H61.1" stroke="#6b7378" stroke-width="1.3"/><path d="M58.6,1078.8 H65.9 V1095.8 H53.6 V1083.8 H58.6 Z" fill="#afb8bf"/><path d="M53.6,1082.8 L57.6,1078.8 V1082.8 Z" fill="#c3cacf"/><path d="M56.1,1086.3 H63.6 M56.1,1089.2 H63.6 M56.1,1091.8 H61.1" stroke="#6b7378" stroke-width="1.3"/><path d="M58.6,1105.05 H65.9 V1122.05 H53.6 V1110.05 H58.6 Z" fill="#afb8bf"/><path d="M53.6,1109.05 L57.6,1105.05 V1109.05 Z" fill="#c3cacf"/><path d="M56.1,1112.55 H63.6 M56.1,1115.45 H63.6 M56.1,1118.05 H61.1" stroke="#6b7378" stroke-width="1.3"/><path d="M58.6,1131.3 H65.9 V1148.3 H53.6 V1136.3 H58.6 Z" fill="#afb8bf"/><path d="M53.6,1135.3 L57.6,1131.3 V1135.3 Z" fill="#c3cacf"/><path d="M56.1,1138.8 H63.6 M56.1,1141.7 H63.6 M56.1,1144.3 H61.1" stroke="#6b7378" stroke-width="1.3"/><path d="M58.6,1157.55 H65.9 V1174.55 H53.6 V1162.55 H58.6 Z" fill="#afb8bf"/><path d="M53.6,1161.55 L57.6,1157.55 V1161.55 Z" fill="#c3cacf"/><path d="M56.1,1165.05 H63.6 M56.1,1167.95 H63.6 M56.1,1170.55 H61.1" stroke="#6b7378" stroke-width="1.3"/><path d="M58.6,1183.8 H65.9 V1200.8 H53.6 V1188.8 H58.6 Z" fill="#afb8bf"/><path d="M53.6,1187.8 L57.6,1183.8 V1187.8 Z" fill="#c3cacf"/><path d="M56.1,1191.3 H63.6 M56.1,1194.2 H63.6 M56.1,1196.8 H61.1" stroke="#6b7378" stroke-width="1.3"/><path d="M58.6,1210.05 H65.9 V1227.05 H53.6 V1215.05 H58.6 Z" fill="#afb8bf"/><path d="M53.6,1214.05 L57.6,1210.05 V1214.05 Z" fill="#c3cacf"/><path d="M56.1,1217.55 H63.6 M56.1,1220.45 H63.6 M56.1,1223.05 H61.1" stroke="#6b7378" stroke-width="1.3"/><path d="M58.6,1236.3 H65.9 V1253.3 H53.6 V1241.3 H58.6 Z" fill="#afb8bf"/><path d="M53.6,1240.3 L57.6,1236.3 V1240.3 Z" fill="#c3cacf"/><path d="M56.1,1243.8 H63.6 M56.1,1246.7 H63.6 M56.1,1249.3 H61.1" stroke="#6b7378" stroke-width="1.3"/><path d="M31,1266.25 L37,1271.75 L31,1277.25" fill="none" stroke="#8c8c8c" stroke-width="1.3"/><path d="M51,1264.45 H58 L60,1266.95 H68.5 V1278.45 H51 Z" fill="#afb8bf"/><rect x="58.5" y="1274.45" width="4" height="8" fill="#fff"/><rect x="62.5" y="1271.45" width="3.5" height="11" fill="#fff"/><rect x="66" y="1269.45" width="4.5" height="13" fill="#fff"/><rect x="59.8" y="1276.05" width="2.4" height="6" fill="#f26522"/><rect x="63.5" y="1273.05" width="2.4" height="9" fill="#f4aa3c"/><rect x="67.2" y="1271.05" width="2.8" height="11" fill="#62b543"/><path d="M35.6,1289.3 H42.8 V1305.1 H32 V1293.5" fill="none" stroke="#b4bdc3" stroke-width="2"/><path d="M31,1292.5 L35.2,1288.3 V1292.5 Z" fill="#b4bdc3"/><path d="M34.6,1297.7 H39 M34.6,1300.3999999999999 H39" stroke="#b4bdc3" stroke-width="1.3"/><circle cx="44" cy="1296.7" r="4.6" fill="#fff"/><rect x="41.4" y="1299.3" width="5.2" height="8" fill="#fff"/><circle cx="44" cy="1296.7" r="2.9" fill="none" stroke="#40b6e0" stroke-width="2.2"/><path d="M44,1299.3 V1306.8 M41.2,1304.5 H44" stroke="#40b6e0" stroke-width="2.2"/><rect x="29.7" y="1315.95" width="15" height="15" fill="none" stroke="#6b6b6b" stroke-width="2"/><path d="M32.7,1326.95 H41.7 V1322.45 H39.7 V1324.95 H37.2 V1320.45 H34.7 V1324.95 H32.7 Z" fill="#6b6b6b"/><circle cx="604" cy="93.2" r="8.6" fill="#89d1ec"/><path d="M606.8,91.0 A3.3,3.3 0 1 0 606.8,95.8" fill="none" stroke="#37474f" stroke-width="1.3"/><circle cx="610.5" cy="99.4" r="4.6" fill="#f2f2f2"/><circle cx="610.5" cy="99.4" r="3.6" fill="#62b543"/><path d="M772.5,88.7 L781.5,97.7 M781.5,88.7 L772.5,97.7" stroke="#a8a8a8" stroke-width="1.2"/><circle cx="827" cy="93.2" r="8.6" fill="#89d1ec"/><path d="M829.8,91.0 A3.3,3.3 0 1 0 829.8,95.8" fill="none" stroke="#37474f" stroke-width="1.3"/><circle cx="833.5" cy="99.4" r="4.6" fill="#f2f2f2"/><circle cx="833.5" cy="99.4" r="3.6" fill="#62b543"/><path d="M985.5,88.7 L994.5,97.7 M994.5,88.7 L985.5,97.7" stroke="#a8a8a8" stroke-width="1.2"/><circle cx="1041" cy="93.2" r="8.6" fill="#89d1ec"/><path d="M1043.8,91.0 A3.3,3.3 0 1 0 1043.8,95.8" fill="none" stroke="#37474f" stroke-width="1.3"/><path d="M1082.5,88.7 L1091.5,97.7 M1091.5,88.7 L1082.5,97.7" stroke="#a8a8a8" stroke-width="1.2"/><circle cx="1137" cy="93.2" r="8.6" fill="#89d1ec"/><path d="M1139.8,91.0 A3.3,3.3 0 1 0 1139.8,95.8" fill="none" stroke="#37474f" stroke-width="1.3"/><circle cx="1143.5" cy="99.4" r="4.6" fill="#f2f2f2"/><circle cx="1143.5" cy="99.4" r="3.6" fill="#62b543"/><path d="M1178.5,88.7 L1187.5,97.7 M1187.5,88.7 L1178.5,97.7" stroke="#a8a8a8" stroke-width="1.2"/><circle cx="1233" cy="93.2" r="8.6" fill="#89d1ec"/><path d="M1235.8,91.0 A3.3,3.3 0 1 0 1235.8,95.8" fill="none" stroke="#37474f" stroke-width="1.3"/><circle cx="1239.5" cy="99.4" r="4.6" fill="#f2f2f2"/><circle cx="1239.5" cy="99.4" r="3.6" fill="#62b543"/><path d="M1446.5,88.7 L1455.5,97.7 M1455.5,88.7 L1446.5,97.7" stroke="#a8a8a8" stroke-width="1.2"/><circle cx="1500" cy="93.2" r="8.6" fill="#89d1ec"/><path d="M1502.8,91.0 A3.3,3.3 0 1 0 1502.8,95.8" fill="none" stroke="#37474f" stroke-width="1.3"/><circle cx="1506.5" cy="99.4" r="4.6" fill="#f2f2f2"/><circle cx="1506.5" cy="99.4" r="3.6" fill="#62b543"/><path d="M1668.5,88.7 L1677.5,97.7 M1677.5,88.7 L1668.5,97.7" stroke="#a8a8a8" stroke-width="1.2"/><rect x="1716.5" y="85.7" width="15" height="15" fill="none" stroke="#6b6b6b" stroke-width="2"/><path d="M1719.5,96.7 H1728.5 V92.2 H1726.5 V94.7 H1724.0 V90.2 H1721.5 V94.7 H1719.5 Z" fill="#6b6b6b"/><path d="M1818.5,88.7 L1827.5,97.7 M1827.5,88.7 L1818.5,97.7" stroke="#a8a8a8" stroke-width="1.2"/><path d="M1871.3999999999999,86.4 H1878.6 V102.2 H1867.8 V90.60000000000001" fill="none" stroke="#b4bdc3" stroke-width="2"/><path d="M1866.8,89.60000000000001 L1871.0,85.4 V89.60000000000001 Z" fill="#b4bdc3"/><path d="M1870.3999999999999,94.80000000000001 H1874.8 M1870.3999999999999,97.5 H1874.8" stroke="#b4bdc3" stroke-width="1.3"/><circle cx="1879.8" cy="93.80000000000001" r="4.6" fill="#f2f2f2"/><rect x="1877.2" y="96.4" width="5.2" height="8" fill="#f2f2f2"/><circle cx="1879.8" cy="93.80000000000001" r="2.9" fill="none" stroke="#40b6e0" stroke-width="2.2"/><path d="M1879.8,96.4 V103.9 M1877.0,101.60000000000001 H1879.8" stroke="#40b6e0" stroke-width="2.2"/><path d="M2023.5,88.7 L2032.5,97.7 M2032.5,88.7 L2023.5,97.7" stroke="#a8a8a8" stroke-width="1.2"/><path d="M2077,85.2 H2084.3 V95.2 H2072 V90.2 H2077 Z" fill="#afb8bf"/><path d="M2072,89.2 L2076,85.2 V89.2 Z" fill="#c3cacf"/><rect x="2069.4" y="96.0" width="19" height="7.6" fill="#c5a8f0"/><text x="2070.8" y="102.80000000000001" font-family="Liberation Sans" font-weight="bold" font-size="8.5" fill="#4b3d5c">MF</text><path d="M2281.5,88.7 L2290.5,97.7 M2290.5,88.7 L2281.5,97.7" stroke="#a8a8a8" stroke-width="1.2"/><rect x="70.9" y="43.5" width="1.2" height="24.5" fill="#d0d0d0"/><rect x="112.0" y="43.5" width="1.2" height="24.5" fill="#d0d0d0"/><rect x="153.3" y="43.5" width="1.2" height="24.5" fill="#d0d0d0"/><rect x="292.2" y="43.5" width="1.2" height="24.5" fill="#d0d0d0"/><rect x="496.0" y="43.5" width="1.2" height="24.5" fill="#d0d0d0"/><rect x="569.8" y="43.5" width="1.2" height="24.5" fill="#d0d0d0"/><rect x="675.8" y="43.5" width="1.2" height="24.5" fill="#d0d0d0"/><rect x="716.9" y="43.5" width="1.2" height="24.5" fill="#d0d0d0"/><rect x="758.4" y="43.5" width="1.2" height="24.5" fill="#d0d0d0"/><path d="M10,50 H16.8 L17.6,52.2 H25.9 V54.6 H12.1 L10,59.6 Z" fill="#6e6e6e"/><path d="M12.7,56 H28 L24.8,63.4 H10.1 Z" fill="#6e6e6e"/><path d="M50.6,47 H56.8 V55 H50.7 V60.8 H53 V64.6 H44.8 V52 H50.6 Z" fill="#6e6e6e"/><path d="M45,51 L49.6,47 V51 Z" fill="#6e6e6e"/><path d="M51.3,60.7 H61 M56,56 V65.6" stroke="#f2f2f2" stroke-width="3.6"/><path d="M51.3,60.7 H61 M56,56 V65.6" stroke="#6e6e6e" stroke-width="1.6"/><path d="M86.2,54 A6.3,6.3 0 0 1 98.4,54.5" fill="none" stroke="#6e6e6e" stroke-width="1.9"/><path d="M98.5,58.3 A6.3,6.3 0 0 1 86.2,58.6" fill="none" stroke="#6e6e6e" stroke-width="1.9"/><path d="M84.6,49.6 V55 H90 Z" fill="#6e6e6e"/><path d="M100,63 V57.2 H94.4 Z" fill="#6e6e6e"/><path d="M127,51 V62.7 H138.6" fill="none" stroke="#6e6e6e" stroke-width="1.8"/><path d="M131.6,58.5 L139,51" stroke="#6e6e6e" stroke-width="1.8"/><path d="M134.3,48.3 H140.9 V55 Z" fill="#6e6e6e"/><circle cx="174.6" cy="55.8" r="7.6" fill="none" stroke="#6e6e6e" stroke-width="1.9"/><path d="M174.6,48 V52.4 M174.6,59.2 V63.6 M167,55.8 H171.3 M178,55.8 H182.3" stroke="#6e6e6e" stroke-width="1.9"/><path d="M198.3,48.3 H204.2 L206,50.6 H216 V62 H198.3 Z" fill="#afb8bf"/><rect x="207" y="56.5" width="11" height="10.5" fill="#f2f2f2"/><rect x="208.3" y="57.6" width="3.8" height="3.8" fill="#3fb0e0"/><rect x="213.2" y="57.6" width="3.8" height="3.8" fill="#3fb0e0"/><rect x="208.3" y="62.3" width="3.8" height="3.8" fill="#3fb0e0"/><rect x="213.2" y="62.3" width="3.8" height="3.8" fill="#3fb0e0"/><path d="M231.2,50.2 H236.6 M231.2,54 H236 M231.2,57.6 H236 M231.2,61.4 H236.6" stroke="#6e6e6e" stroke-width="1.2"/><rect x="240.4" y="48.7" width="7.6" height="14" rx="1.5" fill="none" stroke="#6e6e6e" stroke-width="1.3"/><rect x="264" y="49" width="16.5" height="14" rx="1.5" fill="#e6e9ee" stroke="#6b7280" stroke-width="1.2"/><path d="M264,52 H280.5 M269.5,49 V63 M275,49 V58" stroke="#6b7280" stroke-width="1.2"/><ellipse cx="277" cy="62.3" rx="4.6" ry="2.9" fill="#f2f2f2" stroke="#2f6fe8" stroke-width="1.2"/><circle cx="277" cy="62.3" r="1.2" fill="#2f6fe8"/><circle cx="312.3" cy="54.3" r="5.7" fill="none" stroke="#6e6e6e" stroke-width="2.2"/><path d="M316.4,58.4 L321.2,63.2" stroke="#6e6e6e" stroke-width="2.6"/><circle cx="346" cy="55.5" r="8.5" fill="#f5b2c0"/><circle cx="348.5" cy="59.5" r="5" fill="#f2f2f2"/><circle cx="348.5" cy="59.3" r="3.2" fill="none" stroke="#8d9ca8" stroke-width="1.3"/><path d="M350.8,61.6 L353.3,64.6" stroke="#8d9ca8" stroke-width="1.4"/><circle cx="378.5" cy="55.5" r="8.5" fill="#98d08a"/><circle cx="381.0" cy="59.5" r="5" fill="#f2f2f2"/><circle cx="381.0" cy="59.3" r="3.2" fill="none" stroke="#8d9ca8" stroke-width="1.3"/><path d="M383.3,61.6 L385.8,64.6" stroke="#8d9ca8" stroke-width="1.4"/><path d="M411,46 L421,55 H418.8 V64.5 Q418.8,66 417.3,66 H404.7 Q403.2,66 403.2,64.5 V55 H401 Z" fill="#6e6e6e"/><rect x="408.2" y="58" width="5.6" height="5.6" fill="#f2f2f2"/><rect x="435.5" y="49" width="16" height="14.2" rx="1.6" fill="#e8effc" stroke="#3478f6" stroke-width="1.3"/><rect x="437.8" y="51.7" width="1.6" height="1.2" fill="#3478f6"/><rect x="441" y="51.7" width="1.6" height="1.2" fill="#3478f6"/><rect x="468.3" y="47.3" width="16.5" height="16.8" rx="1.6" fill="#f6f1ff" stroke="#8a4ff0" stroke-width="1.3"/><text x="471" y="60.2" font-family="Liberation Sans" font-size="11.5" fill="#8a4ff0">M</text><path d="M524.5,55.8 H510.5 M515.8,50.5 L510.5,55.8 L515.8,61.1" fill="none" stroke="#6e6e6e" stroke-width="1.4"/><path d="M542.5,55.8 H556.5 M551.2,50.5 L556.5,55.8 L551.2,61.1" fill="none" stroke="#6e6e6e" stroke-width="1.4"/><path d="M582,48.2 H600 V50.3 H582 Z" fill="#9aa7b0"/><path d="M582,50.3 V54.5 M587,50.3 V54 M592,50.3 V53 M596.5,50.3 V53 M600,50.3 V54" stroke="#9aa7b0" stroke-width="1.2"/><rect x="581" y="59" width="7.6" height="7" fill="#f28c5a"/><path d="M582.6,59 V57.3 A2.2,2.2 0 0 1 587,57.3 V59" fill="none" stroke="#f28c5a" stroke-width="1.6"/><circle cx="595.3" cy="60.4" r="3.6" fill="none" stroke="#2f7fb0" stroke-width="1.8"/><path d="M595.3,54.6 V56.2 M595.3,64.6 V66.2 M589.5,60.4 H591.1 M599.5,60.4 H601.1 M591.2,56.3 L592.3,57.4 M598.3,63.4 L599.4,64.5 M591.2,64.5 L592.3,63.4 M598.3,57.4 L599.4,56.3" stroke="#2f7fb0" stroke-width="1.5"/><path d="M616.7,47.8 H630.4 V57.5 M616.7,47.8 V64.2 H625" fill="none" stroke="#9aa7b0" stroke-width="3.4" stroke-linejoin="round"/><path d="M626,58.6 L632.2,62.2 V66 H629.5 Z" fill="#2f7fb0"/><ellipse cx="656" cy="57.5" rx="5.3" ry="7" fill="#5aaa64"/><path d="M651.5,48.5 L654,51 M660.5,48.5 L658,51 M647.8,54 H651 M661,54 H664.2 M647.8,58.5 H651 M661,58.5 H664.2 M647.8,62.8 H651 M661,62.8 H664.2" stroke="#5aaa64" stroke-width="1.6"/><path d="M653.5,56.3 H658.5 M653.5,59.8 H658.5" stroke="#f2f2f2" stroke-width="1.2"/><rect x="690" y="48.6" width="14.8" height="14.8" fill="#6b6b6b"/><path d="M693.3,52.7 H701.5 M693.3,55.5 H701.5 M693.3,58.2 H701.5" stroke="#e0e0e0" stroke-width="1.2"/><path d="M731.5,62.5 L740.5,53.5" stroke="#6e6e6e" stroke-width="3"/><path d="M739,50.5 A4.5,4.5 0 0 0 745,56.5 L747.3,53 Q747.5,50.5 745.5,50 L743.3,52.6 L741.4,52 L741,50 L743.5,47.6 Q741,47 739,50.5 Z" fill="#6e6e6e"/><defs><clipPath id="lc"><circle cx="20.1" cy="17.6" r="9.2"/></clipPath></defs><g clip-path="url(#lc)"><rect x="10" y="8" width="21" height="20" fill="#111"/><polygon points="12,11.2 22.5,10.6 24,13.6 14,15.5 10.5,16" fill="#a0147a"/><polygon points="10,15.5 24,13.6 15.3,22.8 10,22" fill="#f05a28"/><polygon points="23.8,13.8 30,13.4 30,22.8 22,23.5 19.5,18.5" fill="#00907e"/><polygon points="19,19 23,24 26,25.6 13,25.6 16,23.5" fill="#3a10c8"/><path d="M14.5,23.5 L25,12.5" stroke="#111" stroke-width="1.3"/></g><text x="10.6" y="17" font-family="Liberation Sans" font-weight="bold" font-size="7.6" fill="#fff">JA</text><text x="17.3" y="24.6" font-family="Liberation Sans" font-weight="bold" font-size="7.6" fill="#fff">D</text><text x="23.2" y="23.2" font-family="Liberation Sans" font-weight="bold" font-size="7" fill="#fff">x</text><path d="M2416,18.5 H2428" stroke="#000" stroke-width="1"/><rect x="2471.5" y="14.5" width="9" height="9" rx="1.5" fill="none" stroke="#000" stroke-width="1"/><path d="M2474,12.5 H2481.5 Q2483.5,12.5 2483.5,14.5 V21.5" fill="none" stroke="#000" stroke-width="1"/><path d="M2526,12 L2538,24 M2538,12 L2526,24" stroke="#000" stroke-width="1"/><path d="M2224.5,128.3 L2232.7,136.5 M2232.7,128.3 L2224.5,136.5" stroke="#a8a8a8" stroke-width="1.1"/><text x="2337" y="138.6" font-family="Liberation Sans" font-weight="bold" font-size="16" textLength="18" fill="#8a9199">Cc</text><text x="2370.3" y="138.6" font-family="Liberation Sans" font-weight="bold" font-size="16" textLength="16.2" fill="#8a9199">W</text><rect x="2404.3" y="135.8" width="2.4" height="2.4" fill="#8a9199"/><path d="M2413,126.2 V135 M2409.2,128.4 L2416.8,132.8 M2416.8,128.4 L2409.2,132.8" stroke="#8a9199" stroke-width="1.8"/><path d="M2443,139 V125.3 M2437.6,130.7 L2443,125.3 L2448.4,130.7" fill="none" stroke="#6e6e6e" stroke-width="1.4"/><path d="M2476,124 V138 M2470.6,132.6 L2476,138 L2481.4,132.6" fill="none" stroke="#6e6e6e" stroke-width="1.4"/><rect x="2506.2" y="123.4" width="11.2" height="12.5" fill="#6e6e6e"/><path d="M2509.5,126.6 H2515.5 M2510.5,129.2 H2515.5 M2511.5,131.8 H2515.5" stroke="#d9d9d9" stroke-width="1"/><circle cx="2504.6" cy="132.8" r="4.6" fill="#f2f2f2"/><circle cx="2504.6" cy="132.8" r="3.6" fill="none" stroke="#6e6e6e" stroke-width="1.8"/><path d="M2507.3,135.6 L2511.5,139.8" stroke="#6e6e6e" stroke-width="2"/><path d="M2536.5,127.8 L2545.5,136.8 M2545.5,127.8 L2536.5,136.8" stroke="#9aa5ad" stroke-width="1.1"/><circle cx="237" cy="1356" r="7.5" fill="#e38686"/><rect x="235.8" y="1351" width="2.4" height="6" fill="#fff"/><circle cx="237" cy="1359.8" r="1.3" fill="#fff"/><path d="M481,1348 L489.5,1363.5 H472.5 Z" fill="#f4aa3c" stroke="#f4aa3c" stroke-width="1" stroke-linejoin="round"/><rect x="480" y="1352.5" width="2" height="6" fill="#fff"/><rect x="480" y="1359.8" width="2" height="2" fill="#fff"/><polygon points="1217,738.2 1244.5,716.7 1246.1,724.1 1742.9,581.7 1742.6,583.3 1248.4,733.9 1251.6,740.9" fill="#f55252"/></svg></body></html>
